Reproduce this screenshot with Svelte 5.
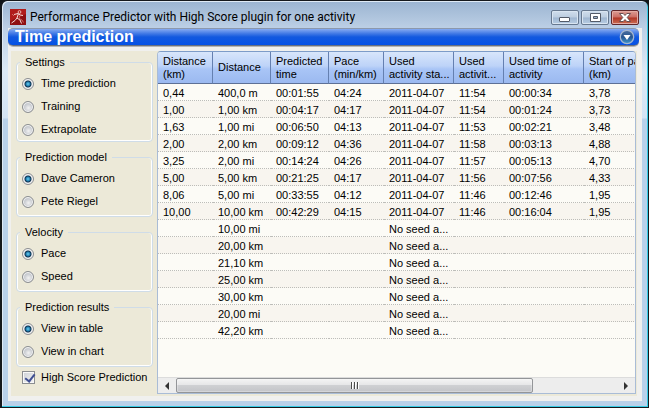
<script>
  const groups = [
    { name: 'mode', title: 'Settings', options: ['Time prediction', 'Training', 'Extrapolate'] },
    { name: 'model', title: 'Prediction model', options: ['Dave Cameron', 'Pete Riegel'] },
    { name: 'velocity', title: 'Velocity', options: ['Pace', 'Speed'] },
    { name: 'results', title: 'Prediction results', options: ['View in table', 'View in chart'] }
  ];
  let selected = $state({
    mode: 'Time prediction',
    model: 'Dave Cameron',
    velocity: 'Pace',
    results: 'View in table'
  });
  let highScore = $state(true);

  const columns = [
    { lines: ['Distance', '(km)'], width: 55 },
    { lines: ['Distance'], width: 58 },
    { lines: ['Predicted', 'time'], width: 58 },
    { lines: ['Pace', '(min/km)'], width: 55 },
    { lines: ['Used', 'activity sta...'], width: 70 },
    { lines: ['Used', 'activit...'], width: 50 },
    { lines: ['Used time of', 'activity'], width: 80 },
    { lines: ['Start of part', '(km)'], width: 80 }
  ];
  const day = '2011-04-07';
  const none = 'No seed a...';
  const rows = [
    ['0,44', '400,0 m', '00:01:55', '04:24', day, '11:54', '00:00:34', '3,78'],
    ['1,00', '1,00 km', '00:04:17', '04:17', day, '11:54', '00:01:24', '3,73'],
    ['1,63', '1,00 mi', '00:06:50', '04:13', day, '11:53', '00:02:21', '3,48'],
    ['2,00', '2,00 km', '00:09:12', '04:36', day, '11:58', '00:03:13', '4,88'],
    ['3,25', '2,00 mi', '00:14:24', '04:26', day, '11:57', '00:05:13', '4,70'],
    ['5,00', '5,00 km', '00:21:25', '04:17', day, '11:56', '00:07:56', '4,33'],
    ['8,06', '5,00 mi', '00:33:55', '04:12', day, '11:46', '00:12:46', '1,95'],
    ['10,00', '10,00 km', '00:42:29', '04:15', day, '11:46', '00:16:04', '1,95'],
    ['', '10,00 mi', '', '', none, '', '', ''],
    ['', '20,00 km', '', '', none, '', '', ''],
    ['', '21,10 km', '', '', none, '', '', ''],
    ['', '25,00 km', '', '', none, '', '', ''],
    ['', '30,00 km', '', '', none, '', '', ''],
    ['', '20,00 mi', '', '', none, '', '', ''],
    ['', '42,20 km', '', '', none, '', '', '']
  ];
</script>

<div class="window">
  <header class="titlebar">
    <svg class="app" viewBox="0 0 16 16" aria-hidden="true">
      <rect width="16" height="16" fill="#8e0f12" />
      <path d="M0 0h16v5L0 12z" fill="#b01c1c" />
      <circle cx="9.5" cy="3" r="1.4" fill="none" stroke="#f3d0cc" stroke-width=".8" />
      <path d="M4 5.5l4-1 2.200 1.500 2.800.5M8.300 5L7 9l3 2 1.500 3.500M7 9l-2 2.500L1.500 14" fill="none" stroke="#f6dcd8" stroke-width="1" />
      <path d="M10 6.500L9 9.500l3 1.500 1.500 2.500M2 5l2 2" fill="none" stroke="#d97f78" stroke-width=".8" />
    </svg>
    <h1>Performance Predictor with High Score plugin for one activity</h1>
    <div class="controls">
      <button type="button" aria-label="Minimize">
        <svg viewBox="0 0 26 13"><rect x="7.500" y="6.500" width="10" height="4" rx=".5" fill="#fff" stroke="#535b68" /></svg>
      </button>
      <button type="button" aria-label="Maximize">
        <svg viewBox="0 0 26 13"><path d="M8.500 2.500h10v8h-10z" fill="#fff" stroke="#535b68" /><path d="M11.500 5.500h4v2h-4z" fill="#9fb4cc" stroke="#535b68" /></svg>
      </button>
      <button type="button" class="close" aria-label="Close">
        <svg viewBox="0 0 26 13"><path d="M7.500 2.500h3.700L13 4.500l1.800-2h3.700L15.200 6.500l3.300 4h-3.700L13 8.500l-1.800 2H7.500l3.300-4z" fill="#fff" stroke="#5c4548" stroke-width=".9" /></svg>
      </button>
    </div>
  </header>

  <main>
    <div class="banner">
      <h2>Time prediction</h2>
      <button type="button" aria-label="Show menu">
        <svg viewBox="0 0 16 16">
          <defs>
            <linearGradient id="knob" x2="0" y2="1"><stop stop-color="#4c6f9e" /><stop offset=".5" stop-color="#285590" /><stop offset="1" stop-color="#3e9ad0" /></linearGradient>
          </defs>
          <circle cx="8" cy="8" r="6.700" fill="url(#knob)" stroke="#a5b6cf" stroke-width="1.300" />
          <path d="M4.500 6h7L8 11z" fill="#fff" />
        </svg>
      </button>
    </div>

    <div class="content">
      <form class="side">
        {#each groups as group}
          <fieldset>
            <legend>{group.title}</legend>
            {#each group.options as option}
              <label>
                <input type="radio" name={group.name} value={option} bind:group={selected[group.name]} />
                {option}
              </label>
            {/each}
          </fieldset>
        {/each}
        <label class="single">
          <input type="checkbox" bind:checked={highScore} />
          High Score Prediction
        </label>
      </form>

      <section class="list">
        <div class="view">
          <table>
            <colgroup>
              {#each columns as column}<col style="width: {column.width}px" />{/each}
            </colgroup>
            <thead>
              <tr>
                {#each columns as column}
                  <th scope="col">{#each column.lines as line}<span>{line}</span>{/each}</th>
                {/each}
              </tr>
            </thead>
            <tbody>
              {#each rows as row}
                <tr>{#each row as cell}<td>{cell}</td>{/each}</tr>
              {/each}
            </tbody>
          </table>
        </div>
        <div class="scroll">
          <button type="button" aria-label="Scroll left"><svg viewBox="0 0 6 8"><path d="M5 0v8L1 4z" fill="#333" /></svg></button>
          <div class="track"><div class="thumb"><i></i><i></i><i></i></div></div>
          <button type="button" aria-label="Scroll right"><svg viewBox="0 0 6 8"><path d="M1 0v8l4-4z" fill="#333" /></svg></button>
        </div>
      </section>
    </div>
  </main>
</div>

<style>
  :global(body) {
    margin: 0;
    background: #101418;
  }
  .window,
  .window * {
    box-sizing: border-box;
  }
  .window {
    display: flex;
    flex-direction: column;
    height: 100vh;
    min-height: 400px;
    padding: 0 6px 6px;
    border: 1px solid #15181c;
    border-left-width: 2px;
    border-radius: 7px 7px 0 0;
    background: linear-gradient(#9bb4d1, #bdd0e6 28px, #dce9f6 70px, #d3e3f4 117px, #b9d1ea 118px);
    box-shadow: inset -1px -1px #35cbe5, inset 1px 1px #dfeaf5;
    font: 11px/13px "Liberation Sans", Arial, sans-serif;
    color: #000;
  }
  button {
    display: block;
    margin: 0;
    padding: 0;
    border: 0;
    background: none;
  }
  svg {
    display: block;
  }
  .titlebar {
    display: flex;
    flex: none;
    align-items: center;
    height: 27px;
    padding: 5px 3px 0 2px;
  }
  .app {
    width: 16px;
    height: 16px;
  }
  h1 {
    flex: 1;
    margin: 0 0 0 4px;
    overflow: hidden;
    white-space: nowrap;
    font: 12px/16px Roboto, sans-serif;
  }
  .controls {
    display: flex;
    gap: 2px;
  }
  .controls button {
    width: 28px;
    height: 15px;
    border: 1px solid #66788f;
    border-radius: 2px;
    background: linear-gradient(#d0deec, #bccde0 48%, #9fb6d0 52%, #b8cde3);
    box-shadow: inset 0 0 0 1px #d9e5f1;
  }
  .controls .close {
    border-color: #61262a;
    background: linear-gradient(#dc9c94, #cb6c62 48%, #b03424 52%, #cb6e54);
    box-shadow: inset 0 0 0 1px #e3aaa2;
  }
  .controls svg {
    width: 26px;
    height: 13px;
  }
  main {
    display: flex;
    flex: 1;
    flex-direction: column;
    min-height: 0;
    padding: 0 3px 5px 0;
    background: #f0f0ee;
  }
  .banner {
    display: flex;
    flex: none;
    align-items: center;
    justify-content: space-between;
    height: 18px;
    padding: 0 4px 0 7px;
    border-top: 1px solid #8c98ac;
    border-bottom: 1px solid #68707f;
    border-radius: 5px;
    background: linear-gradient(#86abf2, #3b75e4 5px, #1259df 8px, #0451e6);
    box-shadow: 0 1px #b5b5b5;
  }
  h2 {
    margin: 0;
    font: bold 16px/16px "Liberation Sans", Arial, sans-serif;
    color: #fff;
  }
  .banner svg {
    width: 16px;
    height: 16px;
  }
  .content {
    display: flex;
    flex: 1;
    min-height: 0;
    margin: 5px 0 0 3px;
    padding-right: 3px;
    background: linear-gradient(to left, #f0f0ee 2px, #ece9d8 2px);
  }
  .side {
    display: flex;
    flex: none;
    flex-direction: column;
    gap: 9px;
    width: 146px;
    padding: 5px 4px 0 5px;
  }
  fieldset {
    min-width: 0;
    margin: 0;
    padding: 3px 0 3px 5px;
    border: 1px solid #cfdce8;
    border-radius: 4px;
    box-shadow: inset 0 -1px #fff, inset -1px 0 #fff, inset 1px 0 #fff;
  }
  fieldset:first-child {
    padding-bottom: 0;
  }
  legend {
    margin-left: -2px;
    padding: 0 5px;
    background: #ece9d8;
  }
  label {
    display: flex;
    align-items: center;
    gap: 7px;
    height: 23px;
    white-space: nowrap;
  }
  .single {
    height: 13px;
    margin-top: -5px;
    padding-left: 6px;
    gap: 6px;
  }
  input {
    flex: none;
    width: 12px;
    height: 12px;
    margin: 0;
    appearance: none;
    border: 1px solid #8b8e91;
  }
  [type='radio'] {
    border-radius: 50%;
    background: radial-gradient(circle at 55% 60%, #f2f2f2, #c9ccd1 4px);
    box-shadow: inset 0 0 0 1px #f5f5f5;
  }
  [type='radio']:checked {
    background: radial-gradient(circle at 5px 5px, #6fd0f2, #1f7eaf 2px, #10324f 3px, #dfe3e7 4px);
  }
  [type='checkbox'] {
    width: 13px;
    height: 13px;
    background: linear-gradient(135deg, #cdd1d7, #f4f4f4);
    box-shadow: inset 0 0 0 1px #f8f8f8;
  }
  [type='checkbox']:checked::before {
    content: '';
    display: block;
    width: 4px;
    height: 8px;
    margin: 0 0 0 4px;
    border: solid #3f4f92;
    border-width: 0 2px 2px 0;
    transform: rotate(38deg);
  }
  .list {
    display: flex;
    flex: 1;
    flex-direction: column;
    min-width: 0;
    margin-bottom: 2px;
    border: 1px solid #a9bcd6;
    border-top-color: #7d9cc8;
    border-radius: 4px 4px 0 0;
    overflow: hidden;
    background: #fcfbf6;
  }
  .view {
    flex: 1;
    min-height: 0;
    overflow: hidden;
  }
  table {
    width: 506px;
    table-layout: fixed;
    border-collapse: separate;
    border-spacing: 0;
  }
  th {
    height: 32px;
    padding: 0 0 0 5px;
    border-right: 1px solid #6580b0;
    border-bottom: 1px solid #5d7096;
    background: linear-gradient(#d8e6fb, #bdd3f8 45%, #a9c5f6 55%, #9bb9f0);
    font-weight: normal;
    text-align: left;
    white-space: nowrap;
  }
  th span {
    display: block;
  }
  td {
    height: 17px;
    padding: 2px 0 0 5px;
    border-bottom: 1px dotted #bdbdb9;
    line-height: 14px;
    white-space: nowrap;
  }
  tbody tr:nth-child(even) {
    background: #f8f5ef;
  }
  .scroll {
    display: flex;
    flex: none;
    height: 16px;
    border-top: 1px solid #dcdcdc;
    background: #ededed;
  }
  .scroll button {
    display: grid;
    place-items: center;
    width: 18px;
  }
  .scroll svg {
    width: 6px;
    height: 8px;
  }
  .track {
    display: flex;
    flex: 1;
  }
  .thumb {
    display: flex;
    align-items: center;
    justify-content: center;
    gap: 1px;
    width: 81%;
    border: 1px solid #939598;
    border-radius: 2px;
    background: linear-gradient(#f4f4f4, #e6e6e8 45%, #cfd0d3 50%, #c3c4c8);
    box-shadow: inset 0 0 0 1px #fafafa55;
  }
  .thumb i {
    width: 2px;
    height: 7px;
    border-left: 1px solid #4c4c4c;
    border-right: 1px solid #fff;
  }
</style>
